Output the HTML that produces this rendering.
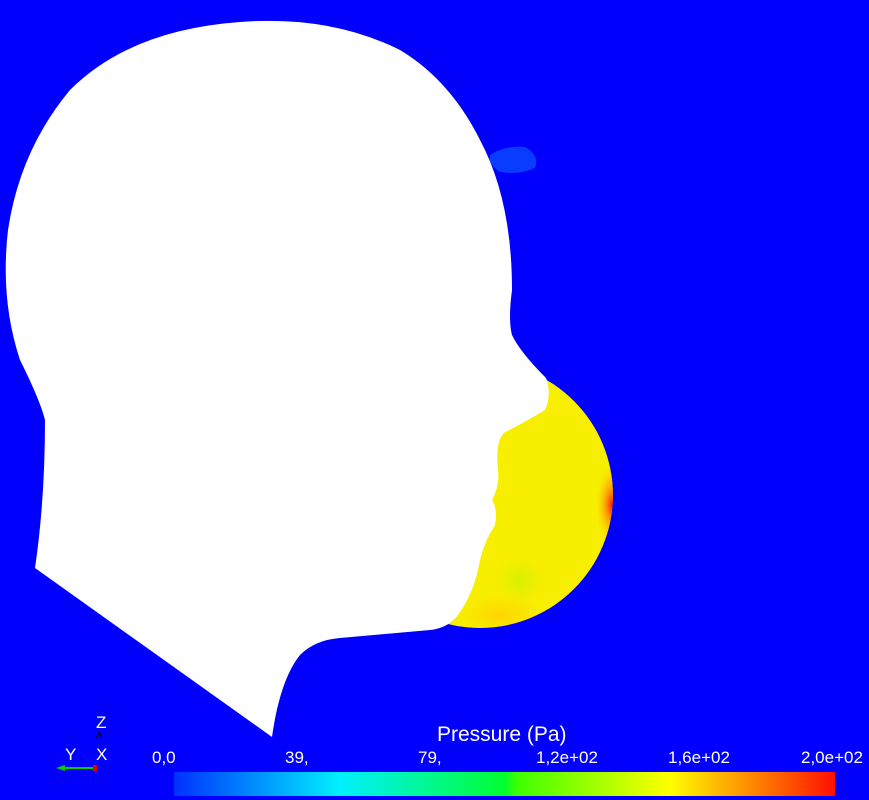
<!DOCTYPE html>
<html><head><meta charset="utf-8"><style>
html,body{margin:0;padding:0;background:#0000fc;width:869px;height:800px;overflow:hidden;font-family:"Liberation Sans",sans-serif;}
</style></head><body>
<svg width="869" height="800" viewBox="0 0 869 800" style="position:absolute;left:0;top:0">
<defs>
<clipPath id="cc"><circle cx="480" cy="495" r="133"/></clipPath>
<radialGradient id="red" cx="0.5" cy="0.5" r="0.5">
<stop offset="0" stop-color="#ff2000"/><stop offset="0.5" stop-color="#ff9a00" stop-opacity="0.7"/><stop offset="1" stop-color="#ffd000" stop-opacity="0"/>
</radialGradient>
<radialGradient id="grn" cx="0.5" cy="0.5" r="0.5">
<stop offset="0" stop-color="#d4f000"/><stop offset="1" stop-color="#e8f000" stop-opacity="0"/>
</radialGradient>
<radialGradient id="org" cx="0.5" cy="0.5" r="0.5">
<stop offset="0" stop-color="#ffd200"/><stop offset="1" stop-color="#ffe000" stop-opacity="0"/>
</radialGradient>
<linearGradient id="bar" x1="0" x2="1">
<stop offset="0" stop-color="#0030ff"/><stop offset="0.25" stop-color="#00f0ff"/><stop offset="0.5" stop-color="#00ff30"/><stop offset="0.52" stop-color="#40ff00"/><stop offset="0.75" stop-color="#ffff00"/><stop offset="1" stop-color="#ff1000"/>
</linearGradient>
</defs>
<path d="M490 155 Q505 145 525 147 Q540 155 535 168 Q520 175 500 172 Q488 165 490 155Z" fill="#0a3cff"/>
<g clip-path="url(#cc)">
<circle cx="480" cy="495" r="133" fill="#f7ee00"/>
<ellipse cx="612" cy="505" rx="16" ry="40" fill="url(#red)"/>
<ellipse cx="520" cy="580" rx="25" ry="25" fill="url(#grn)"/>
<ellipse cx="500" cy="615" rx="45" ry="22" fill="url(#org)"/>
</g>
<path d="M45 420 Q45 500 35 568 L272 737 Q280 680 300 655 Q315 640 340 638 L430 630 Q450 628 460 612 Q475 590 480 560 Q485 540 495 525 Q498 510 492 500 Q500 485 498 470 Q495 440 505 432 Q520 425 545 410 Q552 395 546 378 Q520 352 512 335 Q508 320 512 290 Q512 200 480 140 Q450 80 400 50 Q330 15 240 22 Q130 30 70 90 Q20 150 8 230 Q0 300 20 360 Q40 400 45 420 Z" fill="#fff"/>
<rect x="174" y="772" width="661" height="24" fill="url(#bar)"/>
<line x1="60" y1="768" x2="96" y2="768" stroke="#00d000" stroke-width="2"/>
<path d="M56 768 L65 765 L65 771Z" fill="#00d000"/>
<rect x="93" y="765" width="4" height="6" fill="#e00000"/>
<path d="M96 738 L99 732 L102 738" stroke="#000" fill="none" stroke-width="1"/>
<g fill="#fff" font-size="17">
<text x="96" y="728">Z</text>
<text x="65" y="760">Y</text>
<text x="96" y="760">X</text>
<text x="152" y="763">0,0</text>
<text x="285" y="763">39,</text>
<text x="418" y="763">79,</text>
<text x="536" y="763">1,2e+02</text>
<text x="668" y="763">1,6e+02</text>
<text x="801" y="763">2,0e+02</text>
<text x="437" y="741" font-size="21">Pressure (Pa)</text>
</g>
</svg>
</body></html>
